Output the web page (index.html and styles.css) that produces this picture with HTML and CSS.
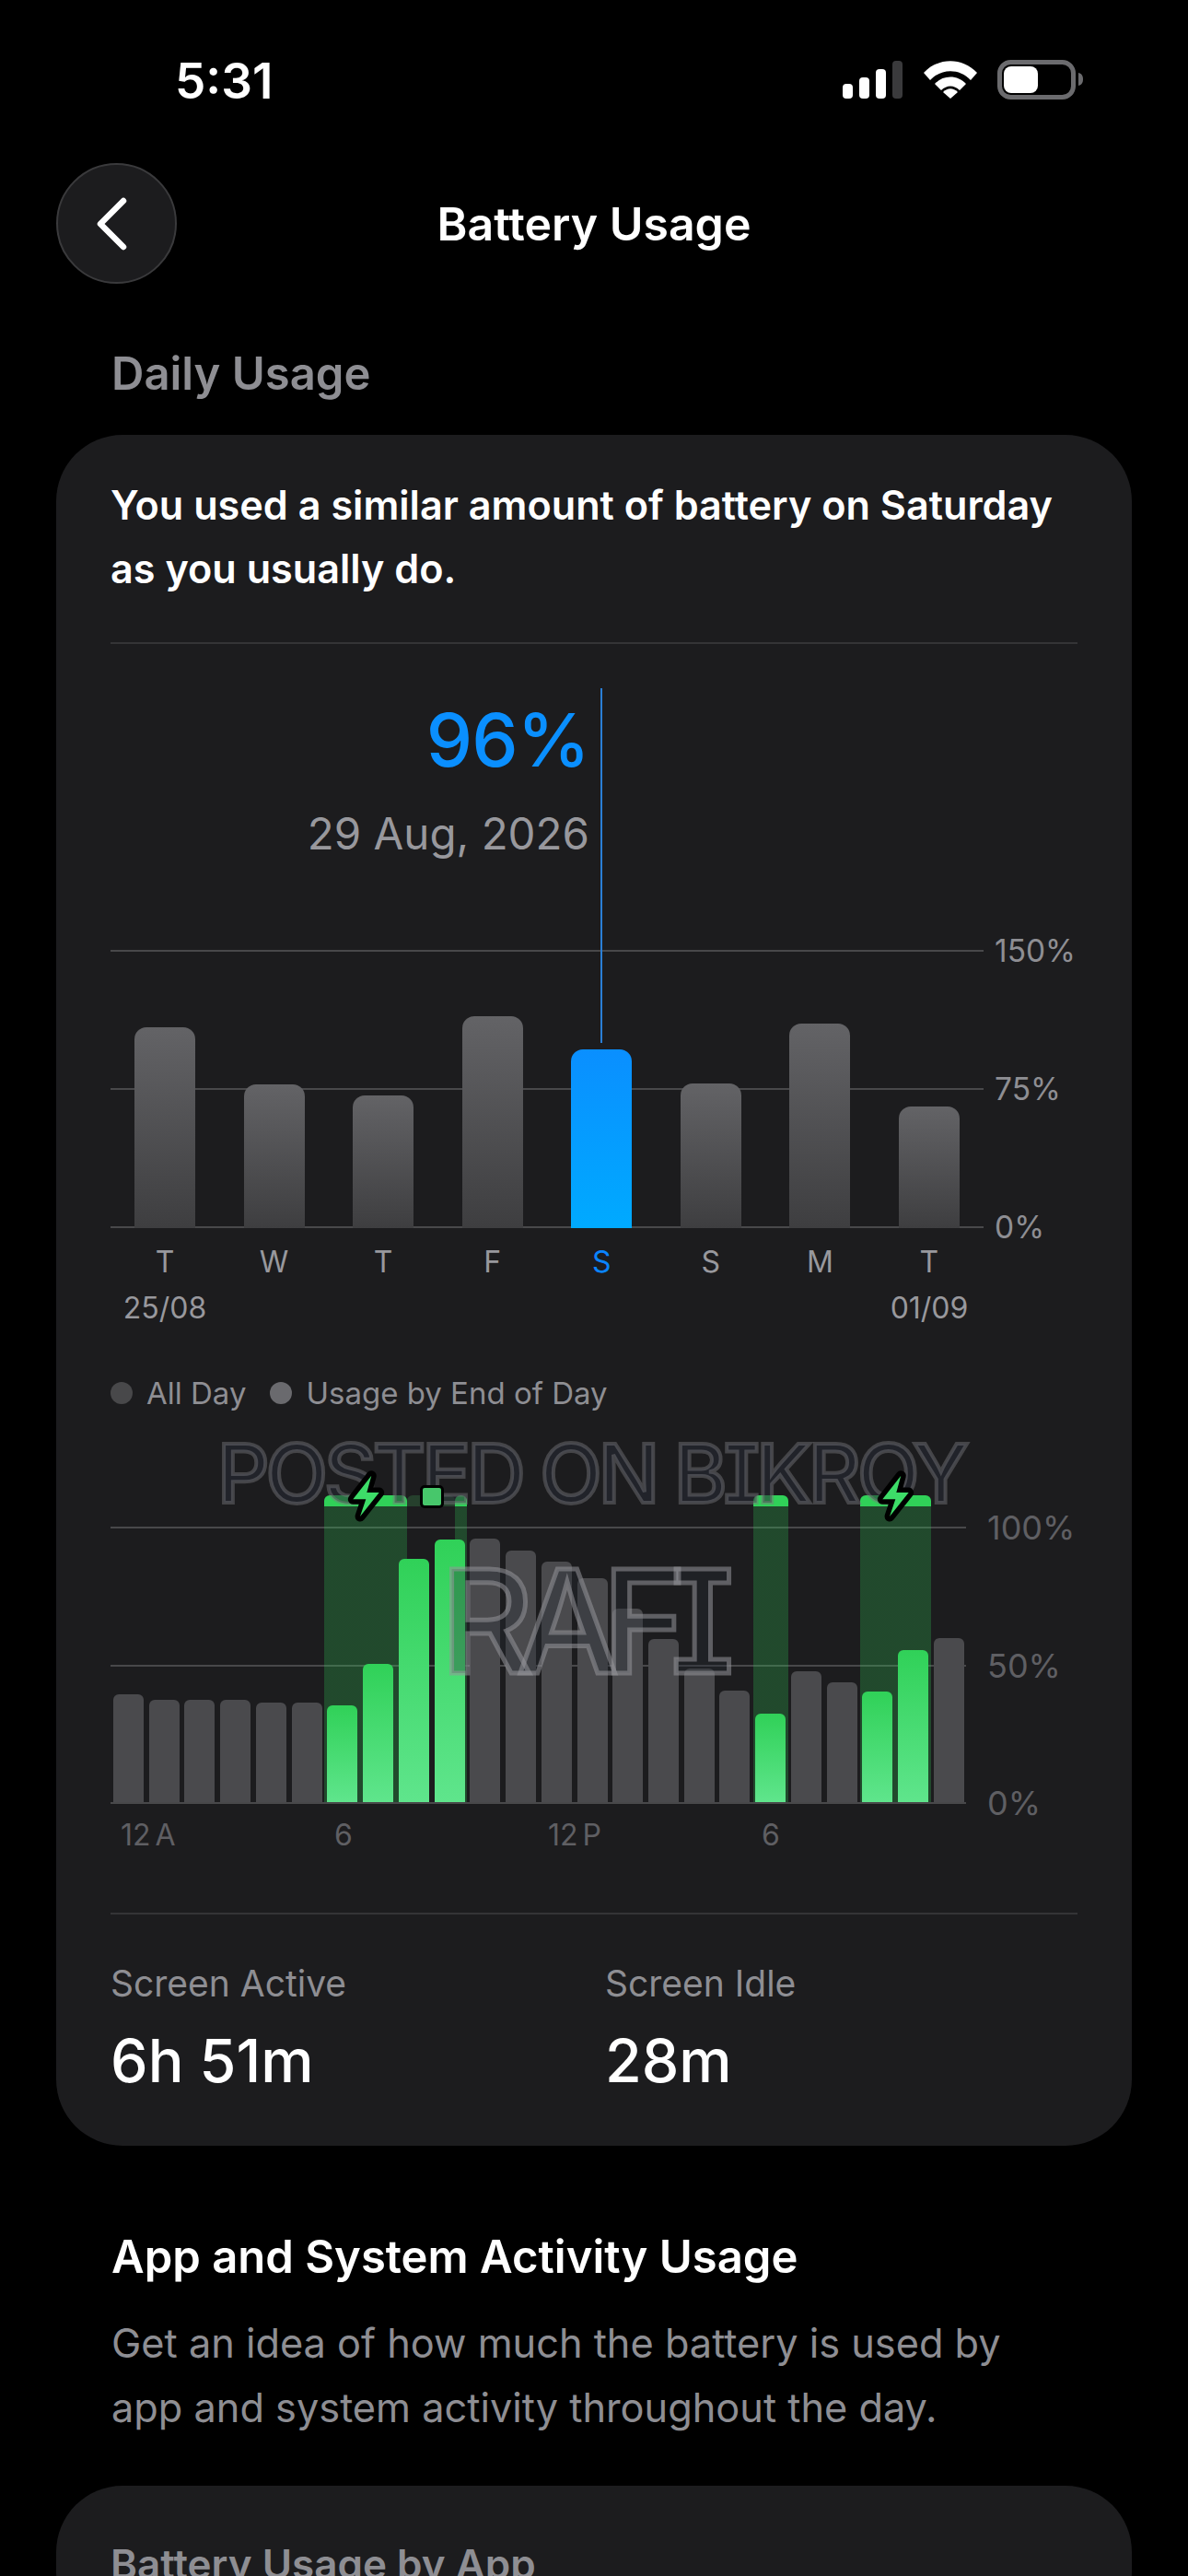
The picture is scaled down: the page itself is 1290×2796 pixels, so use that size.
FILE: index.html
```html
<!DOCTYPE html>
<html lang="en-US">
<head>
    <meta charset="utf-8">
    <title>Battery Usage</title>
    <link rel="stylesheet" href="styles.css">
</head>
<body>
    <header class="status-bar">
        <span class="clock">5:31</span>
        <svg class="status-icons" width="262" height="44" viewBox="0 0 262 44">
            <rect x="0" y="26" width="11" height="16" rx="4" fill="#fff"/>
            <rect x="18" y="19" width="11" height="23" rx="4" fill="#fff"/>
            <rect x="36" y="10" width="11" height="32" rx="4" fill="#fff"/>
            <rect x="54" y="1" width="11" height="41" rx="4" fill="#3a3a3c"/>
            <path d="M88 14 C104 -3 130 -3 146 14 L139 22 C127 9 107 9 95 22 Z" fill="#fff"/>
            <path d="M100 26 C109 16 125 16 134 26 L127 33 C121 27 113 27 107 33 Z" fill="#fff"/>
            <path d="M109 35 C114 30 120 30 125 35 L117 42 Z" fill="#fff"/>
            <rect x="170.5" y="2.5" width="80" height="38" rx="12" fill="none" stroke="#6b6b6e" stroke-width="5"/>
            <rect x="175" y="7" width="37" height="29" rx="8" fill="#fff"/>
            <path d="M256 14 C260 15 261 18 261 21 C261 24 260 27 256 28 Z" fill="#6b6b6e"/>
        </svg>
    </header>

    <nav class="nav-bar">
        <div class="back-btn">
            <svg width="36" height="60" viewBox="0 0 36 60">
                <path d="M31 5 L6 30 L31 55" fill="none" stroke="#fff" stroke-width="6.5" stroke-linecap="round" stroke-linejoin="round"/>
            </svg>
        </div>
        <h1 class="nav-title">Battery Usage</h1>
    </nav>

    <main>
        <h2 class="section-label">Daily Usage</h2>

        <section class="card">
            <p class="summary">You used a similar amount of battery on Saturday as you usually do.</p>
            <hr class="divider">

            <div class="week">
                <span class="pointer"></span>
                <div class="readout">
                    <div class="readout-value">96%</div>
                    <div class="readout-date">29 Aug, 2026</div>
                </div>

                <div class="plot week-plot">
                    <div class="grid-row week-row"><span class="grid-line"></span><span class="grid-label">150%</span></div>
                    <div class="grid-row week-row"><span class="grid-line"></span><span class="grid-label">75%</span></div>
                    <div class="grid-row week-row"><span class="grid-line"></span><span class="grid-label">0%</span></div>
                    <div class="week-bars">
                        <div class="week-bar" style="height:218px"></div>
                        <div class="week-bar" style="height:156px"></div>
                        <div class="week-bar" style="height:144px"></div>
                        <div class="week-bar" style="height:230px"></div>
                        <div class="week-bar week-bar-active" style="height:194px"></div>
                        <div class="week-bar" style="height:157px"></div>
                        <div class="week-bar" style="height:222px"></div>
                        <div class="week-bar" style="height:132px"></div>
                    </div>
                </div>

                <div class="day-row">
                    <span>T</span><span>W</span><span>T</span><span>F</span>
                    <span class="day-active">S</span><span>S</span><span>M</span><span>T</span>
                </div>
                <div class="date-row">
                    <span>25/08</span><span>01/09</span>
                </div>
            </div>

            <div class="legend">
                <span class="legend-dot dot-all"></span><span>All Day</span>
                <span class="legend-dot dot-end"></span><span>Usage by End of Day</span>
            </div>

            <div class="plot day-plot">
                <div class="grid-row day-row-line"><span class="grid-line"></span><span class="grid-label day-label">100%</span></div>
                <div class="grid-row day-row-line"><span class="grid-line"></span><span class="grid-label day-label">50%</span></div>
                <div class="grid-row day-row-line"><span class="grid-line"></span><span class="grid-label day-label">0%</span></div>

                <div class="charge-band" style="left:232px;width:90px"></div>
                <div class="charge-band charge-band-faint" style="left:322px;width:52px"></div>
                <div class="charge-band" style="left:374px;width:13px"></div>
                <div class="charge-band" style="left:698px;width:38px"></div>
                <div class="charge-band" style="left:814px;width:77px"></div>

                <div class="hour-bars">
                    <div class="hour-bar" style="height:117px"></div>
                    <div class="hour-bar" style="height:111px"></div>
                    <div class="hour-bar" style="height:111px"></div>
                    <div class="hour-bar" style="height:111px"></div>
                    <div class="hour-bar" style="height:108px"></div>
                    <div class="hour-bar" style="height:108px"></div>
                    <div class="hour-bar hour-bar-charging" style="height:105px"></div>
                    <div class="hour-bar hour-bar-charging" style="height:150px"></div>
                    <div class="hour-bar hour-bar-charging" style="height:264px"></div>
                    <div class="hour-bar hour-bar-charging" style="height:285px"></div>
                    <div class="hour-bar" style="height:286px"></div>
                    <div class="hour-bar" style="height:273px"></div>
                    <div class="hour-bar" style="height:261px"></div>
                    <div class="hour-bar" style="height:243px"></div>
                    <div class="hour-bar" style="height:210px"></div>
                    <div class="hour-bar" style="height:177px"></div>
                    <div class="hour-bar" style="height:145px"></div>
                    <div class="hour-bar" style="height:121px"></div>
                    <div class="hour-bar hour-bar-charging" style="height:96px"></div>
                    <div class="hour-bar" style="height:142px"></div>
                    <div class="hour-bar" style="height:130px"></div>
                    <div class="hour-bar hour-bar-charging" style="height:120px"></div>
                    <div class="hour-bar hour-bar-charging" style="height:165px"></div>
                    <div class="hour-bar" style="height:178px"></div>
                </div>

                <div class="watermark watermark-top">POSTED ON BIKROY</div>

                <svg class="bolt bolt-first" width="45" height="60" viewBox="0 0 45 60">
                    <path d="M28.3 7.7 L8.3 33.3 L22.3 33.3 L16 52 L36.7 26 L23.3 26 Z" fill="#3ddc68" stroke="#000" stroke-width="11" stroke-linejoin="round" paint-order="stroke"/>
                </svg>
                <span class="charge-stub"></span>
                <svg class="bolt bolt-last" width="45" height="60" viewBox="0 0 45 60">
                    <path d="M28.3 7.7 L8.3 33.3 L22.3 33.3 L16 52 L36.7 26 L23.3 26 Z" fill="#3ddc68" stroke="#000" stroke-width="11" stroke-linejoin="round" paint-order="stroke"/>
                </svg>

                <div class="watermark watermark-name">RAFI</div>
            </div>

            <div class="hour-row">
                <span>12 A</span><span>6</span><span>12 P</span><span>6</span>
            </div>

            <hr class="divider divider-lower">

            <div class="screen-stats">
                <div class="stat">
                    <div class="stat-label">Screen Active</div>
                    <div class="stat-value">6h 51m</div>
                </div>
                <div class="stat">
                    <div class="stat-label">Screen Idle</div>
                    <div class="stat-value">28m</div>
                </div>
            </div>
        </section>

        <h2 class="activity-title">App and System Activity Usage</h2>
        <p class="activity-text">Get an idea of how much the battery is used by app and system activity throughout the day.</p>

        <section class="card card-apps">
            <h3 class="apps-title">Battery Usage by App</h3>
        </section>
    </main>
</body>
</html>
```

FILE: styles.css
```css
* {
    box-sizing: border-box;
}

html, body {
    margin: 0;
    height: 2796px;
    overflow: hidden;
    background: #000;
}

body {
    font-family: Inter, "Liberation Sans", sans-serif;
    color: #fff;
}

h1, h2, h3, p {
    margin: 0;
}

.status-bar {
    height: 177px;
    padding: 58px 113px 0 190px;
    display: flex;
    justify-content: space-between;
    align-items: flex-start;
}

.clock {
    font-size: 53px;
    line-height: 60px;
    font-weight: 600;
}

.status-icons {
    margin-top: 7px;
}

.nav-bar {
    display: grid;
    grid-template-columns: 131px 1fr 131px;
    align-items: center;
    padding: 0 61px;
}

.back-btn {
    width: 131px;
    height: 131px;
    border-radius: 50%;
    background: #1c1c1e;
    border: 2px solid #3a3a3c;
    display: flex;
    align-items: center;
    justify-content: center;
    padding-right: 12px;
}

.nav-title {
    text-align: center;
    font-size: 50px;
    line-height: 58px;
    font-weight: 600;
}

.section-label {
    margin: 69px 0 37px 121px;
    font-size: 49px;
    line-height: 58px;
    font-weight: 600;
    color: #8e8e93;
}

.card {
    margin: 0 61px;
    padding: 42px 59px 55px;
    border-radius: 72px;
    background: #1c1c1e;
}

.summary {
    font-size: 43.2px;
    line-height: 69px;
    font-weight: 600;
}

.divider {
    margin: 45px 0 0;
    border: 0;
    height: 2px;
    background: #343436;
}

/* weekly chart */
.week {
    position: relative;
    margin-top: 48px;
}

.pointer {
    position: absolute;
    left: 532px;
    top: 0;
    width: 2px;
    height: 385px;
    background: #2a7fd6;
    z-index: 1;
}

.readout {
    height: 284px;
    padding: 6px 530px 0 0;
    text-align: right;
}

.readout-value {
    font-size: 80px;
    line-height: 100px;
    font-weight: 500;
    letter-spacing: -1px;
    color: #0a8fff;
}

.readout-date {
    margin-top: 22px;
    font-size: 47.5px;
    line-height: 60px;
    color: #98989d;
}

.plot {
    position: relative;
    display: flex;
    flex-direction: column;
    justify-content: space-between;
}

.week-plot {
    height: 302px;
}

.grid-row {
    display: flex;
    align-items: center;
    height: 2px;
}

.grid-line {
    height: 2px;
    background: #48484a;
}

.week-row .grid-line {
    width: 948px;
}

.grid-label {
    margin-left: 12px;
    white-space: nowrap;
    font-size: 33.5px;
    color: #8e8e93;
}

.week-bars {
    position: absolute;
    left: 26px;
    bottom: 0;
    width: 896px;
    display: flex;
    justify-content: space-between;
    align-items: flex-end;
}

.week-bar {
    width: 66px;
    border-radius: 13px 13px 0 0;
    background: linear-gradient(#636366, #3e3e40);
}

.week-bar-active {
    background: linear-gradient(#0a8fff, #00aaff);
}

.day-row, .date-row {
    width: 948px;
    padding: 0 26px;
    display: flex;
    justify-content: space-between;
    font-size: 32px;
    line-height: 40px;
    color: #98989d;
}

.day-row {
    margin-top: 17px;
}

.date-row {
    margin-top: 10px;
}

.day-row span, .date-row span {
    width: 66px;
    display: flex;
    justify-content: center;
    white-space: nowrap;
}

.day-active {
    color: #0a84ff;
}

.legend {
    margin-top: 52px;
    display: flex;
    align-items: center;
    font-size: 33px;
    line-height: 40px;
    color: #8e8e93;
}

.legend-dot {
    width: 24px;
    height: 24px;
    border-radius: 50%;
    margin-right: 15px;
}

.dot-all {
    background: #48484a;
}

.dot-end {
    margin-left: 26px;
    background: #6a6a6e;
}

/* hourly chart */
.day-plot {
    margin-top: 80px;
    height: 346px;
    padding-top: 45px;
}

.day-row-line .grid-line {
    width: 929px;
}

.day-label {
    margin-left: 23px;
    font-size: 36px;
    color: #5f5f63;
}

.charge-band {
    position: absolute;
    top: 11px;
    bottom: 2px;
    background: linear-gradient(#30d158 12px, rgba(48, 209, 88, .25) 12px);
    border-radius: 6px 6px 0 0;
}

.charge-band-faint {
    bottom: auto;
    height: 12px;
    background: #26402d;
}

.hour-bars {
    position: absolute;
    left: 3px;
    bottom: 2px;
    width: 924px;
    display: flex;
    justify-content: space-between;
    align-items: flex-end;
}

.hour-bar {
    width: 33px;
    border-radius: 6px 6px 0 0;
    background: #4a4a4d;
}

.hour-bar-charging {
    background: linear-gradient(#30d158, #5fe58c);
}

.bolt {
    position: absolute;
    top: -18px;
}

.bolt-first {
    left: 255px;
}

.bolt-last {
    left: 830px;
}

.charge-stub {
    position: absolute;
    left: 336px;
    top: 0;
    width: 26px;
    height: 25px;
    border: 3px solid #000;
    border-radius: 5px;
    background: #47c76b;
}

.watermark {
    position: absolute;
    white-space: nowrap;
    font-weight: 500;
    font-feature-settings: "cv08";
}

.watermark-top {
    left: 116px;
    top: -68px;
    font-size: 88px;
    line-height: 110px;
    letter-spacing: -4px;
    color: rgba(38, 42, 52, .55);
    -webkit-text-stroke: 4px rgba(120, 120, 125, .45);
}

.watermark-name {
    left: 358px;
    top: 53px;
    font-size: 156px;
    line-height: 190px;
    letter-spacing: -18px;
    color: rgba(38, 42, 52, .35);
    -webkit-text-stroke: 5px rgba(150, 150, 155, .55);
}

.hour-row {
    margin-top: 14px;
    padding-left: 11px;
    display: grid;
    grid-template-columns: repeat(4, 232px);
    font-size: 32px;
    line-height: 40px;
    word-spacing: -4px;
    color: #5f5f63;
}

.divider-lower {
    margin-top: 64px;
}

.screen-stats {
    margin-top: 52px;
    display: grid;
    grid-template-columns: 537px 1fr;
}

.stat-label {
    font-size: 39px;
    line-height: 46px;
    color: #8e8e93;
}

.stat-value {
    margin-top: 24px;
    font-size: 64.5px;
    line-height: 74px;
    font-weight: 500;
}

.activity-title {
    margin: 92px 0 0 121px;
    font-size: 49px;
    line-height: 58px;
    font-weight: 600;
}

.activity-text {
    margin: 29px 130px 0 121px;
    font-size: 43.3px;
    line-height: 70px;
    color: #8e8e93;
}

.card-apps {
    margin-top: 50px;
    padding-top: 60px;
}

.apps-title {
    font-size: 44px;
    line-height: 50px;
    font-weight: 600;
    color: #8e8e93;
}
```
